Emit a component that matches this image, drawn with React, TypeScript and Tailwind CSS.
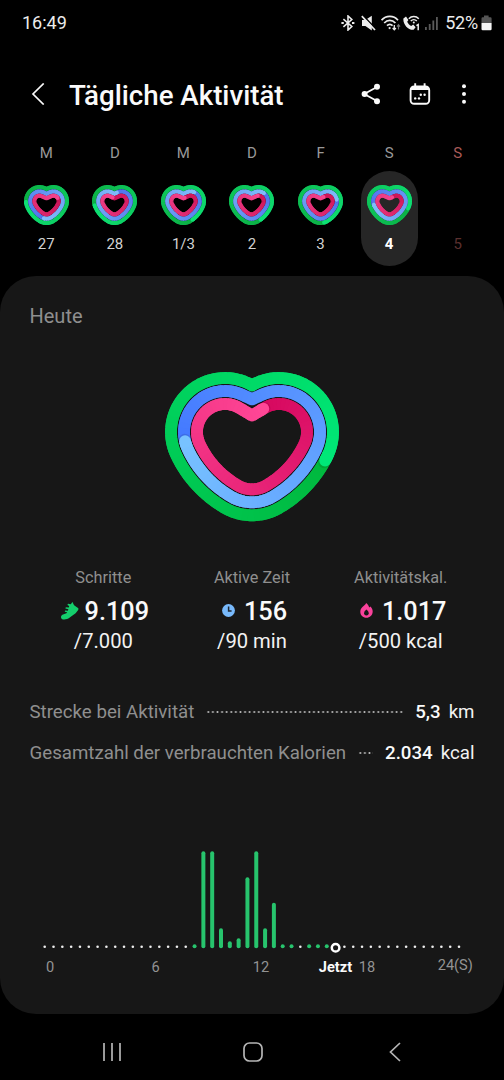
import React from 'react';

type Point = [number, number];

interface RingSpec {
  radius: number;
  notchY: number;
  from: string;
  to: string;
}

const STEPS = 240;

const GREEN = { from: '#00b83e', to: '#00e878' };
const BLUE = { from: '#4479ff', to: '#78c2ff' };
const PINK = { from: '#d6085f', to: '#ff4796' };

const LARGE_RINGS: RingSpec[] = [
  { radius: 54, notchY: 25.3, ...GREEN },
  { radius: 41, notchY: 39.3, ...BLUE },
  { radius: 28, notchY: 55.5, ...PINK },
];

const SMALL_RINGS: RingSpec[] = [
  { radius: 52.3, notchY: 27.2, from: '#0cb045', to: '#0ee074' },
  { radius: 36, notchY: 45, from: '#4f74ee', to: '#80bdfa' },
  { radius: 20, notchY: 61.5, from: '#cc1458', to: '#f5458f' },
];

const mixColor = (a: string, b: string, t: number) => {
  const parse = (hex: string) => [1, 3, 5].map((i) => parseInt(hex.slice(i, i + 2), 16));
  const ca = parse(a);
  const cb = parse(b);
  return `rgb(${ca.map((v, i) => Math.round(v + (cb[i] - v) * t)).join(',')})`;
};

const addArc = (out: Point[], cx: number, cy: number, r: number, from: number, to: number) => {
  for (let i = 0; i <= 40; i++) {
    const a = from + ((to - from) * i) / 40;
    out.push([cx + r * Math.cos(a), cy + r * Math.sin(a)]);
  }
};

const LOBE: Point = [124, 72];
const BOTTOM: Point = [97, 101.3];
const FLANK = 66;

// Centre of the flank arc, equally far from both other centres so the tangents meet.
const flankCenter = (): Point => {
  const dx = BOTTOM[0] - LOBE[0];
  const dy = BOTTOM[1] - LOBE[1];
  const d = Math.hypot(dx, dy);
  const h = Math.sqrt(FLANK * FLANK - (d * d) / 4);
  return [(LOBE[0] + BOTTOM[0]) / 2 - (dy / d) * h, (LOBE[1] + BOTTOM[1]) / 2 + (dx / d) * h];
};

// Outline of a heart, clockwise from the notch, resampled at equal distances.
const heartPoints = (radius: number, notchY: number): Point[] => {
  const dist = Math.hypot(27, notchY - 72);
  const start = Math.atan2(notchY - 72, -27) + Math.acos(Math.min(1, radius / dist));
  const [fx, fy] = flankCenter();
  const a1 = Math.atan2(LOBE[1] - fy, LOBE[0] - fx);
  const a2 = Math.atan2(BOTTOM[1] - fy, BOTTOM[0] - fx);
  const half: Point[] = [[97, notchY]];
  addArc(half, LOBE[0], LOBE[1], radius, start, a1);
  addArc(half, fx, fy, radius + FLANK, a1, a2);
  addArc(half, BOTTOM[0], BOTTOM[1], radius, a2, Math.PI / 2);
  const full = [...half, ...half.slice(0, -1).reverse().map(([x, y]): Point => [194 - x, y])];

  const lengths = [0];
  for (let i = 1; i < full.length; i++) {
    lengths.push(lengths[i - 1] + Math.hypot(full[i][0] - full[i - 1][0], full[i][1] - full[i - 1][1]));
  }
  const total = lengths[lengths.length - 1];
  const result: Point[] = [];
  let k = 1;
  for (let i = 0; i < STEPS; i++) {
    const target = (total * i) / STEPS;
    while (lengths[k] < target) k++;
    const t = (target - lengths[k - 1]) / (lengths[k] - lengths[k - 1] || 1);
    result.push([
      full[k - 1][0] + (full[k][0] - full[k - 1][0]) * t,
      full[k - 1][1] + (full[k][1] - full[k - 1][1]) * t,
    ]);
  }
  return result;
};

interface RingProps {
  spec: RingSpec;
  stroke: number;
  cap: number;
}

const Ring: React.FC<RingProps> = ({ spec, stroke, cap }) => {
  const points = heartPoints(spec.radius, spec.notchY);
  const offset = Math.round(cap * STEPS);
  const at = (i: number) => points[(i + STEPS * 2) % STEPS];
  const slices = [];
  for (let i = 0; i < STEPS; i += 3) {
    const last = Math.min(i + 5, STEPS);
    const d = [];
    for (let j = i - (i ? 1 : 0); j <= last; j++) d.push(at(offset + j).map((v) => v.toFixed(2)).join(' '));
    slices.push(
      <path
        key={i}
        d={`M${d.join('L')}`}
        fill="none"
        stroke={mixColor(spec.from, spec.to, i / STEPS)}
        strokeWidth={stroke}
        strokeLinejoin="round"
      />,
    );
  }
  const [cx, cy] = at(offset);
  const [sx, sy] = at(offset + 1);
  return (
    <g>
      {slices}
      <circle cx={sx} cy={sy} r={stroke / 2} fill={mixColor(spec.from, '#000000', 0.1)} />
      <path
        d={`M${at(offset - 4).join(' ')}L${at(offset - 2).join(' ')}L${cx} ${cy}`}
        fill="none"
        stroke={spec.to}
        strokeWidth={stroke}
        strokeLinejoin="round"
      />
      <circle cx={cx} cy={cy} r={stroke / 2} fill={spec.to} />
    </g>
  );
};

interface HeartProps {
  caps: [number, number, number];
  small?: boolean;
}

const Heart: React.FC<HeartProps> = ({ caps, small }) => (
  <svg viewBox={small ? '10 12 174 149' : '0 0 194 170'} className={small ? 'w-[45px] h-[40px]' : 'w-[194px] h-[170px]'} preserveAspectRatio="none">
    {(small ? SMALL_RINGS : LARGE_RINGS).map((spec, i) => (
      <Ring key={spec.radius} spec={spec} stroke={small ? 15 : 11.8} cap={caps[i]} />
    ))}
  </svg>
);

const StatusBar: React.FC = () => (
  <div className="flex items-center h-[46px] pl-[22px] pr-[12px] text-[#ececec]">
    <span className="text-[18px] leading-none">16:49</span>
    <div className="flex items-center ml-auto">
      <svg className="w-[14px] h-[16px]" viewBox="0 0 14 16" fill="none" stroke="currentColor" strokeWidth="1.6">
        <path d="M2.4 4.2L10.8 11.5L7 15V1L10.8 4.5L2.4 11.8" />
        <path d="M0.4 8h2.4M11 8h2.4" strokeWidth="2.2" />
      </svg>
      <svg className="w-[15px] h-[16px] ml-[6px]" viewBox="0 0 15 16">
        <path d="M1 5h3.4L10.8 0.8v14.6L4.4 11H1z" fill="currentColor" />
        <path d="M1.6 0.2L15 14" stroke="#000" strokeWidth="1.6" />
        <path d="M0.8 1.2L14 15" stroke="currentColor" strokeWidth="1.7" />
      </svg>
      <svg className="w-[20px] h-[16px] ml-[5px]" viewBox="0 0 20 16" fill="none" stroke="currentColor" strokeWidth="1.7">
        <path d="M0.6 5.2C5 0.2 12.6 0.2 17 5.2M3.2 8C6.4 4.4 11.2 4.4 14.4 8M6 10.7C7.8 8.8 9.8 8.8 11.6 10.7" />
        <circle cx="8.6" cy="13.1" r="1.1" fill="currentColor" stroke="none" />
        <path d="M13.3 10v4.6M11.7 13l1.6 1.8 1.6-1.8" strokeWidth="1.3" />
        <path d="M17.5 14.5V10M16 11.6l1.5-1.8 1.5 1.8" strokeWidth="1.2" stroke="#777" />
      </svg>
      <svg className="w-[18px] h-[16px] ml-[2px]" viewBox="0 0 18 16" fill="none" stroke="currentColor">
        <path
          d="M0.4 3.6L3 1.6L5.4 5L4.2 6.8C5 8.7 6.4 10.2 8.2 11L10.2 9.6L12.6 12.2L10.6 14.8C5.4 15.4 -0.2 9.4 0.4 3.6Z"
          fill="currentColor"
          stroke="none"
        />
        <path d="M5.8 3.8C8.6 0.8 13 0.8 15.8 3.8M7.8 6C9.6 4.2 12 4.2 13.8 6" strokeWidth="1.5" />
        <circle cx="10.8" cy="7.6" r="1" fill="currentColor" stroke="none" />
        <path d="M13.4 10.6l1.8-1v5.6" strokeWidth="1.5" />
      </svg>
      <svg className="w-[14px] h-[16px] ml-[4px]" viewBox="0 0 14 16" fill="#5a5a5a">
        <rect x="0" y="12" width="1.8" height="3" />
        <rect x="3.8" y="9" width="1.8" height="6" />
        <rect x="7.4" y="5.5" width="1.8" height="9.5" />
        <rect x="11" y="2" width="1.8" height="13" />
      </svg>
      <span className="ml-[6px] text-[18px] leading-none tracking-[-0.2px]">52%</span>
      <svg className="w-[11px] h-[16px] ml-[3px]" viewBox="0 0 11 16">
        <path d="M3 0.6h4.6v1.6H9.4a1.2 1.2 0 0 1 1.2 1.2V8H0.5V3.4a1.2 1.2 0 0 1 1.2-1.2H3z" fill="#555" />
        <path d="M0.5 8H10.6v6a1.2 1.2 0 0 1-1.2 1.2H1.7A1.2 1.2 0 0 1 0.5 14z" fill="#f5f5f5" />
      </svg>
    </div>
  </div>
);

const Header: React.FC = () => (
  <header className="flex items-center h-[96px] pl-[31px] pr-[37px] text-[#fafafa]">
    <svg className="w-[14px] h-[22px]" viewBox="0 0 14 22" fill="none" stroke="currentColor" strokeWidth="1.7">
      <path d="M12.7 0.5L2 11L12.7 21.5" />
    </svg>
    <h1 className="ml-[24px] pt-[3px] text-[27.7px] leading-none font-medium whitespace-nowrap">Tägliche Aktivität</h1>
    <svg className="w-[20px] h-[22px] ml-auto" viewBox="0 0 20 22" fill="currentColor">
      <path d="M16 4L3.2 11L16 18" fill="none" stroke="currentColor" strokeWidth="1.8" />
      <circle cx="16" cy="3.8" r="3" />
      <circle cx="3.6" cy="11" r="3" />
      <circle cx="16" cy="18.2" r="3" />
    </svg>
    <svg className="w-[22px] h-[24px] ml-[28px]" viewBox="0 0 22 24" fill="currentColor">
      <rect x="1.6" y="4.4" width="18.6" height="17.4" rx="3.6" fill="none" stroke="currentColor" strokeWidth="1.9" />
      <path d="M1.6 8V7.4a3 3 0 0 1 3-3h12.6a3 3 0 0 1 3 3V8z" />
      <path d="M6.2 1.2v4M15.6 1.2v4" stroke="currentColor" strokeWidth="1.9" />
      <circle cx="6.2" cy="16.4" r="1.2" />
      <circle cx="10" cy="16.4" r="1.2" />
      <circle cx="11.8" cy="12.8" r="1.2" />
      <circle cx="15.6" cy="12.8" r="1.2" />
    </svg>
    <svg className="w-[6px] h-[22px] ml-[30px]" viewBox="0 0 6 22" fill="currentColor">
      <circle cx="3" cy="3.3" r="2" />
      <circle cx="3" cy="11" r="2" />
      <circle cx="3" cy="18.7" r="2" />
    </svg>
  </header>
);

interface Day {
  weekday: string;
  date: string;
  caps?: [number, number, number];
  selected?: boolean;
}

const DAYS: Day[] = [
  { weekday: 'M', date: '27', caps: [0.76, 0.53, 0.18] },
  { weekday: 'D', date: '28', caps: [0.73, 0.03, 0.97] },
  { weekday: 'M', date: '1/3', caps: [0.42, 0.12, 0.02] },
  { weekday: 'D', date: '2', caps: [0.42, 0.14, 0.1] },
  { weekday: 'F', date: '3', caps: [0.47, 0.22, 0.05] },
  { weekday: 'S', date: '4', caps: [0.3, 0.73, 0.04], selected: true },
  { weekday: 'S', date: '5' },
];

const WeekStrip: React.FC = () => (
  <div className="grid grid-cols-7 px-3 h-[134px]">
    {DAYS.map((day) => (
      <div key={day.date} className="flex flex-col items-center">
        <span className={`h-[22px] leading-[22px] text-[15px] ${day.caps ? 'text-[#999]' : 'text-[#a95a58]'}`}>{day.weekday}</span>
        <div className={`flex flex-col items-center w-[57px] h-[95px] mt-[7px] pt-[14px] rounded-full ${day.selected ? 'bg-[#262626]' : ''}`}>
          <div className="h-[40px]">{day.caps && <Heart caps={day.caps} small />}</div>
          <span
            className={`mt-[8px] leading-[22px] text-[15px] ${
              day.selected ? 'text-white font-bold' : day.caps ? 'text-[#d2d2d2]' : 'text-[#5b302f]'
            }`}
          >
            {day.date}
          </span>
        </div>
      </div>
    ))}
  </div>
);

interface StatProps {
  label: string;
  value: string;
  goal: string;
  icon: React.ReactNode;
}

const Stat: React.FC<StatProps> = ({ label, value, goal, icon }) => (
  <div className="flex flex-col items-center whitespace-nowrap">
    <span className="text-[16.3px] leading-[22px] text-[#8f8f8f]">{label}</span>
    <div className="flex items-center h-[32px] mt-[7px] text-[#fafafa]">
      {icon}
      <span className="text-[25.3px] leading-none font-medium">{value}</span>
    </div>
    <span className="text-[20.2px] leading-[26px] text-[#f2f2f2]">{goal}</span>
  </div>
);

const ShoeIcon: React.FC = () => (
  <svg className="w-[19px] h-[19px] ml-[2px] mr-[6px] mb-[3px]" viewBox="0 0 19 19">
    <path
      d="M12.4 0.9C13 1.2 13.2 3.4 14.4 4.4L18 7C18.7 7.6 18.6 8.4 18 9.2L15.6 12.2L9.4 16.8C7.6 18.2 4.6 19 2.2 18.2C0.4 17.4 0.6 14.8 2.4 13.8L6.4 12.2L7.2 11.2L4.8 10.8L5 9.6L7.8 9.8L8.4 8.2L5.4 7.6L5.8 6.2L8.8 6.6L9.2 5L7.4 4L8 2.8L10.8 3.2Z"
      fill="#14ce6c"
    />
  </svg>
);

const ClockIcon: React.FC = () => (
  <svg className="w-[13px] h-[13px] ml-[5px] mr-[9px] mb-[4px]" viewBox="0 0 13 13">
    <circle cx="6.5" cy="6.5" r="6.4" fill="#78b9fb" />
    <path d="M6.6 2.6V7H9.6" fill="none" stroke="#1d2733" strokeWidth="1.5" />
  </svg>
);

const FlameIcon: React.FC = () => (
  <svg className="w-[13px] h-[15px] ml-[5px] mr-[9px] mb-[4px]" viewBox="0 0 13 15">
    <path d="M6.2 0C7.6 1.4 8.8 2.6 9.2 4.4L10.4 3.4C12 5 12.8 6.8 12.7 8.8C12.5 12.4 9.8 14.8 6.4 14.8S0.3 12.4 0.3 8.8C0.3 7 1 5.4 2.2 4.2C3.6 2.8 5.4 2 6.2 0Z" fill="#f9429b" />
    <path d="M6.4 6.6C8 7.9 8.7 8.9 8.7 10.3A2.3 2.3 0 0 1 4.1 10.3C4.1 8.9 4.8 7.9 6.4 6.6Z" fill="#171717" />
  </svg>
);

interface DetailRowProps {
  label: string;
  value: string;
  unit: string;
}

const DetailRow: React.FC<DetailRowProps> = ({ label, value, unit }) => (
  <div className="flex items-center h-[41px] whitespace-nowrap">
    <span className="text-[18.7px] text-[#8f8f8f]">{label}</span>
    <div className="flex-1 h-[2px] mx-[12px] mb-[2px] bg-[radial-gradient(circle,#b4b4b4_0.8px,transparent_1.2px)] bg-[length:4.6px_2px] bg-repeat-x" />
    <span className="text-[18.7px] font-medium text-[#fafafa]">{value}</span>
    <span className="ml-[8px] text-[18.7px] text-[#f2f2f2]">{unit}</span>
  </div>
);

const PITCH = 8.815;
const NOW = 33;

// Half-hour slots: bar height in pixels.
const ACTIVITY: Record<number, number> = {
  17: 4, 18: 97, 19: 97, 20: 20, 21: 7, 22: 10, 23: 71, 24: 97, 25: 20, 26: 45.5, 27: 4, 28: 4, 30: 4, 31: 4, 32: 4,
};

const ActivityChart: React.FC = () => (
  <svg className="w-[504px] h-[140px]" viewBox="0 0 504 140" fontSize="14.6" textAnchor="middle">
    {Array.from({ length: 48 }, (_, i) => {
      const x = 44.7 + i * PITCH;
      const height = ACTIVITY[i];
      if (i === NOW) {
        return <circle key={i} cx={x} cy="107.7" r="3.8" fill="none" stroke="#fff" strokeWidth="2.5" />;
      }
      return height ? (
        <rect key={i} x={x - 2} y={108.2 - height} width="4" height={height} rx="2" fill="#27c46d" />
      ) : (
        <circle key={i} cx={x} cy="106.7" r="1.3" fill="#eee" />
      );
    })}
    <g fill="#939393">
      <text x="50" y="131.7">0</text>
      <text x="155.5" y="131.7">6</text>
      <text x="261" y="131.7">12</text>
      <text x="367" y="131.7">18</text>
      <text x="455.3" y="130.3">24(S)</text>
    </g>
    <text x="335.5" y="131.9" fill="#fafafa" fontWeight="700">Jetzt</text>
  </svg>
);

const NavBar: React.FC = () => (
  <nav className="flex items-center flex-1 pl-[102px] pt-[10px] text-[#b5b5b5]">
    <svg className="w-[20px] h-[20px]" viewBox="0 0 20 20" stroke="currentColor" strokeWidth="1.7">
      <path d="M2 1v18M10 1v18M18 1v18" />
    </svg>
    <svg className="w-[20px] h-[20px] ml-[121px]" viewBox="0 0 20 20" fill="none" stroke="currentColor" strokeWidth="1.7">
      <rect x="1" y="1" width="18" height="18" rx="5.5" />
    </svg>
    <svg className="w-[12px] h-[20px] ml-[126px]" viewBox="0 0 12 20" fill="none" stroke="currentColor" strokeWidth="1.7">
      <path d="M11 1L1.5 10L11 19" />
    </svg>
  </nav>
);

export default function App() {
  return (
    <div className="flex flex-col w-[504px] h-[1080px] bg-black overflow-hidden font-[Roboto,sans-serif]">
      <StatusBar />
      <Header />
      <WeekStrip />
      <main className="flex flex-col h-[738px] rounded-[36px] bg-[#171717]">
        <h2 className="h-[84px] pl-[29.5px] pt-[28px] text-[20px] leading-[24px] text-[#8f8f8f]">Heute</h2>
        <div className="flex justify-center h-[170px]">
          <Heart caps={[0.3, 0.743, 0.043]} />
        </div>
        <div className="grid grid-cols-3 px-[29px] mt-[37px]">
          <Stat label="Schritte" value="9.109" goal="/7.000" icon={<ShoeIcon />} />
          <Stat label="Aktive Zeit" value="156" goal="/90 min" icon={<ClockIcon />} />
          <Stat label="Aktivitätskal." value="1.017" goal="/500 kcal" icon={<FlameIcon />} />
        </div>
        <div className="px-[29.5px] mt-[38px]">
          <DetailRow label="Strecke bei Aktivität" value="5,3" unit="km" />
          <DetailRow label="Gesamtzahl der verbrauchten Kalorien" value="2.034" unit="kcal" />
        </div>
        <div className="mt-[66px]">
          <ActivityChart />
        </div>
      </main>
      <NavBar />
    </div>
  );
}
